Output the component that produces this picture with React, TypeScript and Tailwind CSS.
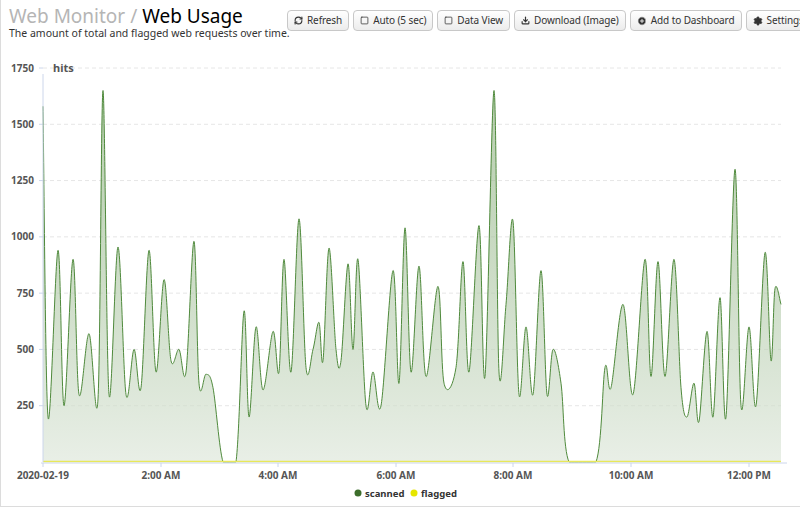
import React from "react";
import { RefreshCw, Square, Download, PlusCircle, Settings } from "lucide-react";

// raw samples read off the chart: [x, hits]
const pts: [number, number][] = [
  [42, 1580], [47, 200], [57, 940], [63, 250], [72, 900], [78, 300], [88, 570], [97, 280], [102, 1650], [108, 300],
  [117, 955], [125, 300], [133, 500], [140, 330], [148, 940], [155, 400], [163, 810], [170, 450], [178, 500], [185, 400],
  [193, 980], [198, 350], [205, 390], [212, 330], [222, 0], [235, 0], [243, 670], [248, 200], [255, 600], [262, 320],
  [272, 580], [278, 400], [283, 900], [290, 400], [298, 1080], [305, 420], [312, 500], [318, 620], [322, 450], [328, 950],
  [335, 500], [340, 450], [347, 880], [352, 500], [357, 900], [365, 250], [372, 400], [380, 250], [392, 850], [398, 350],
  [404, 1040], [410, 400], [418, 870], [425, 380], [437, 780], [443, 350], [455, 420], [462, 890], [468, 400], [478, 1050],
  [484, 380], [493, 1650], [498, 400], [505, 700], [512, 1070], [518, 300], [525, 600], [532, 300], [540, 850], [546, 300],
  [552, 500], [560, 350], [568, 0], [595, 0], [604, 420], [610, 330], [622, 700], [632, 300], [644, 900], [650, 380],
  [657, 890], [664, 380], [673, 900], [680, 330], [686, 200], [693, 350], [698, 180], [706, 580], [712, 200], [719, 730],
  [725, 200], [734, 1300], [740, 250], [748, 600], [755, 250], [764, 930], [770, 450], [774, 770], [780, 700],
];

const BASE = 422; // baseline inside svg (svg starts at page y=40)
const toY = (v: number) => BASE - v * (394 / 1750);

function buildPath() {
  const p = pts.map(([x, v]) => [x, toY(v)]);
  let d = `M${p[0][0]},${p[0][1]}`;
  for (let i = 0; i < p.length - 1; i++) {
    const p0 = p[i - 1] || p[i];
    const p1 = p[i];
    const p2 = p[i + 1];
    const p3 = p[i + 2] || p2;
    const c1x = p1[0] + (p2[0] - p0[0]) / 6;
    const c1y = Math.min(BASE, p1[1] + (p2[1] - p0[1]) / 6);
    const c2x = p2[0] - (p3[0] - p1[0]) / 6;
    const c2y = Math.min(BASE, p2[1] - (p3[1] - p1[1]) / 6);
    d += ` C${c1x},${c1y} ${c2x},${c2y} ${p2[0]},${p2[1]}`;
  }
  return d;
}

const ticks = [
  ["2020-02-19", 42],
  ["2:00 AM", 160],
  ["4:00 AM", 277],
  ["6:00 AM", 395],
  ["8:00 AM", 512],
  ["10:00 AM", 630],
  ["12:00 PM", 748],
] as const;

function Btn({ icon, label }: { icon: React.ReactNode; label: string }) {
  return (
    <button className="flex items-center gap-1 h-[21px] px-[6px] border border-[#c8c8c8] rounded-sm bg-gradient-to-b from-white to-[#ececec] text-[10px] tracking-[-0.1px] text-[#333] whitespace-nowrap shrink-0">
      {icon}
      {label}
    </button>
  );
}

export default function App() {
  const line = buildPath();
  const area = `${line} L780,${BASE} L42,${BASE} Z`;

  return (
    <div className="w-[800px] h-[507px] overflow-hidden bg-white border-l border-b border-[#dcdcdc] font-['DejaVu_Sans',sans-serif]">
      {/* Header */}
      <div className="flex h-10 pl-2">
        <div className="w-[278px] shrink-0">
          <div className="text-[19px] leading-[22px] mt-[5px] font-['Roboto',sans-serif] whitespace-nowrap">
            <span className="text-[#b5b5b5]">Web Monitor / </span>
            <span className="text-black">Web Usage</span>
          </div>
          <div className="text-[10.5px] leading-[13px] text-[#333] font-['Roboto',sans-serif] whitespace-nowrap">
            The amount of total and flagged web requests over time.
          </div>
        </div>
        <div className="flex gap-[4px] mt-[10px]">
          <Btn icon={<RefreshCw size={9} strokeWidth={3} />} label="Refresh" />
          <Btn icon={<Square size={9} />} label="Auto (5 sec)" />
          <Btn icon={<Square size={9} />} label="Data View" />
          <Btn icon={<Download size={9} strokeWidth={3} />} label="Download (Image)" />
          <Btn icon={<PlusCircle size={10} fill="#333" stroke="white" />} label="Add to Dashboard" />
          <Btn icon={<Settings size={10} fill="#333" />} label="Settings" />
        </div>
      </div>

      {/* Chart */}
      <svg width="800" height="467" className="block font-['Roboto',sans-serif]">
        <defs>
          <linearGradient id="g" x1="0" y1="0" x2="0" y2="1">
            <stop offset="0" stopColor="#7ea76e" stopOpacity="0.55" />
            <stop offset="1" stopColor="#dfe8dc" stopOpacity="0.7" />
          </linearGradient>
        </defs>
        {[250, 500, 750, 1000, 1250, 1500, 1750].map((v) => (
          <g key={v}>
            <line x1="42" x2="780" y1={toY(v)} y2={toY(v)} stroke="#e6e6e6" strokeDasharray="4 3" />
            <line x1="38" x2="42" y1={toY(v)} y2={toY(v)} stroke="#ccd6eb" />
            <text x="33" y={toY(v) + 3.5} textAnchor="end" fontSize="10" fontWeight="bold" fill="#555">
              {v}
            </text>
          </g>
        ))}
        <text x="52" y={toY(1750) + 4} fontSize="11" fontWeight="bold" fill="#555">hits</text>
        <path d={area} fill="url(#g)" />
        <path d={line} fill="none" stroke="#4f8a3c" strokeWidth="1" />
        <line x1="42" x2="780" y1={BASE - 0.5} y2={BASE - 0.5} stroke="#e8e85a" strokeWidth="1.5" />
        <line x1="42" x2="42" y1={toY(1750) + 6} y2={BASE} stroke="#ccd6eb" />
        <line x1="40" x2="786" y1={BASE + 1} y2={BASE + 1} stroke="#ccd6eb" />
        {ticks.map(([t, x]) => (
          <g key={t}>
            <line x1={x} x2={x} y1={BASE + 1} y2={BASE + 5} stroke="#ccd6eb" />
            <text x={x} y={BASE + 17} textAnchor="middle" fontSize="10" fontWeight="bold" fill="#555">
              {t}
            </text>
          </g>
        ))}
        <circle cx="357" cy={BASE + 31} r="3.5" fill="#3d6e2b" />
        <text x="364" y={BASE + 35} fontSize="9.5" fontWeight="bold" fill="#333">scanned</text>
        <circle cx="413" cy={BASE + 31} r="3.5" fill="#e6e600" />
        <text x="420" y={BASE + 35} fontSize="9.5" fontWeight="bold" fill="#333">flagged</text>
      </svg>
    </div>
  );
}
